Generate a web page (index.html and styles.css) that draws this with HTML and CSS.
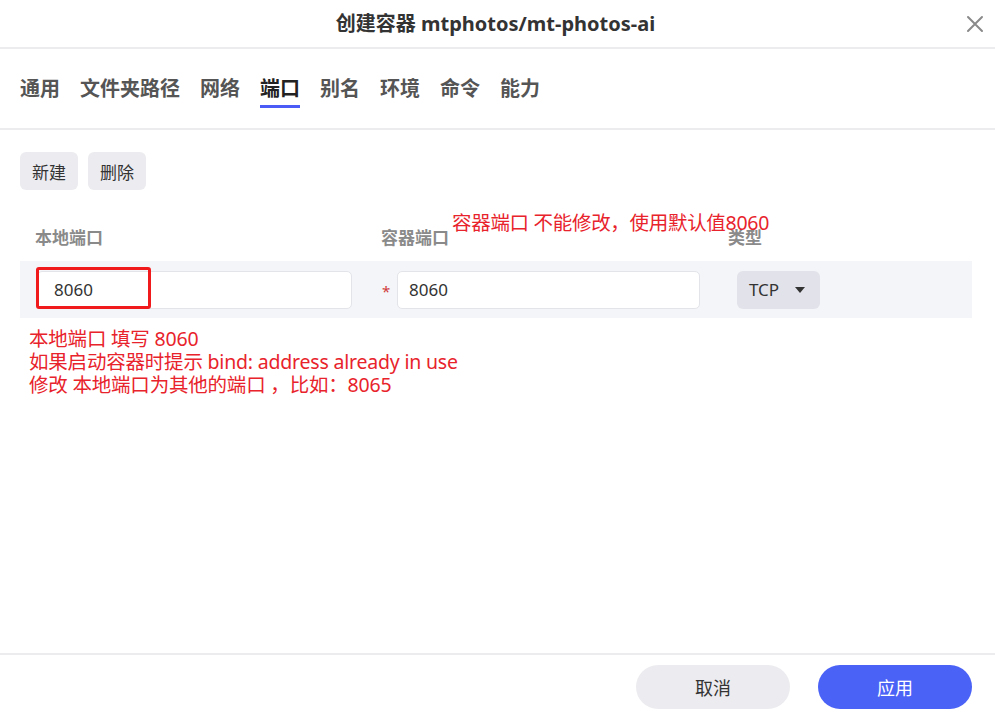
FILE: index.html
```html
<!DOCTYPE html>
<html lang="zh-CN">
<head>
    <meta charset="UTF-8">
    <meta name="viewport" content="width=device-width, initial-scale=1.0">
    <title>创建容器 mtphotos/mt-photos-ai</title>

    <link rel="stylesheet" href="styles.css">
</head>
<body>
    <section class="dialog">
        <header class="dialog_head">
            <h1>创建容器 mtphotos/mt-photos-ai</h1>
            <button class="close" aria-label="关闭">
                <svg width="18" height="18" viewBox="0 0 18 18">
                    <path d="M2 2 L16 16 M16 2 L2 16" stroke="#8a8a8a" stroke-width="2" stroke-linecap="round"/>
                </svg>
            </button>
        </header>

        <nav class="tabs">
            <span>通用</span>
            <span>文件夹路径</span>
            <span>网络</span>
            <span class="active">端口</span>
            <span>别名</span>
            <span>环境</span>
            <span>命令</span>
            <span>能力</span>
        </nav>

        <div class="content">
            <div class="toolbar">
                <button>新建</button>
                <button>删除</button>
            </div>

            <div class="cols">
                <span class="col_local">本地端口</span>
                <span class="col_container">容器端口</span>
                <span class="col_type">类型</span>
                <p class="note note_top">容器端口 不能修改，使用默认值8060</p>
            </div>

            <div class="row">
                <div class="field field_local">
                    <input type="text" value="8060">
                    <span class="mark"></span>
                </div>
                <div class="field field_container">
                    <span class="star">*</span>
                    <input type="text" value="8060">
                </div>
                <div class="select">
                    TCP
                    <svg width="10" height="6" viewBox="0 0 10 6"><path d="M0 0 H10 L5 6 Z" fill="#333"/></svg>
                </div>
            </div>

            <div class="note note_bottom">
                <p>本地端口 填写 8060</p>
                <p>如果启动容器时提示 bind: address already in use</p>
                <p>修改 本地端口为其他的端口 ，比如：8065</p>
            </div>
        </div>

        <footer class="dialog_foot">
            <button class="cancel">取消</button>
            <button class="apply">应用</button>
        </footer>
    </section>
</body>
</html>
```

FILE: styles.css
```css
*{
    margin: 0;
    padding: 0;
    box-sizing: border-box;
    font-family: "Noto Sans", "Noto Sans CJK SC", sans-serif;
}

body{
    width: 995px;
    height: 719px;
    background: #fff;
    overflow: hidden;
}

.dialog{
    height: 719px;
    display: flex;
    flex-direction: column;
}

.dialog_head{
    height: 49px;
    border-bottom: 2px solid #ececef;
    display: flex;
    align-items: center;
    justify-content: center;
    position: relative;
}

.dialog_head h1{
    font-size: 20px;
    font-weight: 700;
    color: #333;
    margin-top: -2px;
    margin-left: -4px;
}

.close{
    position: absolute;
    right: 11px;
    top: 15px;
    background: none;
    border: none;
    width: 18px;
    height: 18px;
}

.tabs{
    height: 81px;
    border-bottom: 2px solid #ececef;
    display: flex;
    gap: 20px;
    padding: 0 20px;
    align-items: flex-start;
}

.tabs span{
    font-size: 20px;
    font-weight: 700;
    color: #555;
    line-height: 28px;
    margin-top: 26px;
    padding-bottom: 2px;
    border-bottom: 3px solid transparent;
}

.tabs span.active{
    color: #222;
    border-bottom-color: #4a5cf5;
}

.content{
    flex: 1;
    padding: 22px 23px 0 20px;
}

.toolbar{
    display: flex;
    gap: 10px;
}

.toolbar button{
    height: 38px;
    padding: 0 12px;
    border: none;
    border-radius: 6px;
    background: #ececf0;
    color: #333;
    font-size: 17px;
}

.cols{
    position: relative;
    display: flex;
    margin-top: 34px;
    height: 37px;
    font-size: 17px;
    font-weight: 700;
    color: #8a8a8a;
}

.col_local{
    width: 361px;
    padding-left: 15px;
}

.col_container{
    width: 347px;
}

.note{
    color: #e8232b;
    font-size: 19.5px;
    line-height: 23px;
    font-weight: 400;
}

.note_top{
    position: absolute;
    left: 432px;
    top: -13px;
    letter-spacing: -0.3px;
}

.row{
    height: 57px;
    background: #f4f5f8;
    display: flex;
    align-items: center;
}

.field{
    position: relative;
    display: flex;
    align-items: center;
}

.field input{
    height: 38px;
    border: 1px solid #e3e4ea;
    border-radius: 5px;
    background: #fff;
    font-size: 17px;
    color: #333;
    padding: 0 12px;
    outline: none;
}

.field_local{
    margin-left: 17px;
}

.field_local input{
    width: 315px;
    padding-left: 16px;
}

.mark{
    position: absolute;
    left: -1px;
    top: -4px;
    width: 115px;
    height: 42px;
    border: 3px solid #f0191c;
    border-radius: 3px;
}

.field_container{
    margin-left: 30px;
}

.star{
    color: #d03a3a;
    font-size: 15px;
    width: 15px;
    padding-top: 2px;
}

.field_container input{
    width: 303px;
    padding-left: 11px;
}

.select{
    margin-left: 37px;
    width: 83px;
    height: 38px;
    border-radius: 6px;
    background: #e2e3ea;
    display: flex;
    align-items: center;
    gap: 16px;
    padding-left: 12px;
    font-size: 17px;
    color: #333;
}

.note_bottom{
    margin-top: 9px;
    margin-left: 9px;
    letter-spacing: -0.2px;
}

.note_bottom p{
    height: 23px;
}

.dialog_foot{
    height: 66px;
    border-top: 2px solid #ececef;
    display: flex;
    justify-content: flex-end;
    gap: 28px;
    padding: 10px 23px 0 0;
}

.dialog_foot button{
    width: 154px;
    height: 44px;
    border: none;
    border-radius: 22px;
    font-size: 18px;
}

.cancel{
    background: #ececf0;
    color: #333;
}

.apply{
    background: #4b62f6;
    color: #fff;
}
```
